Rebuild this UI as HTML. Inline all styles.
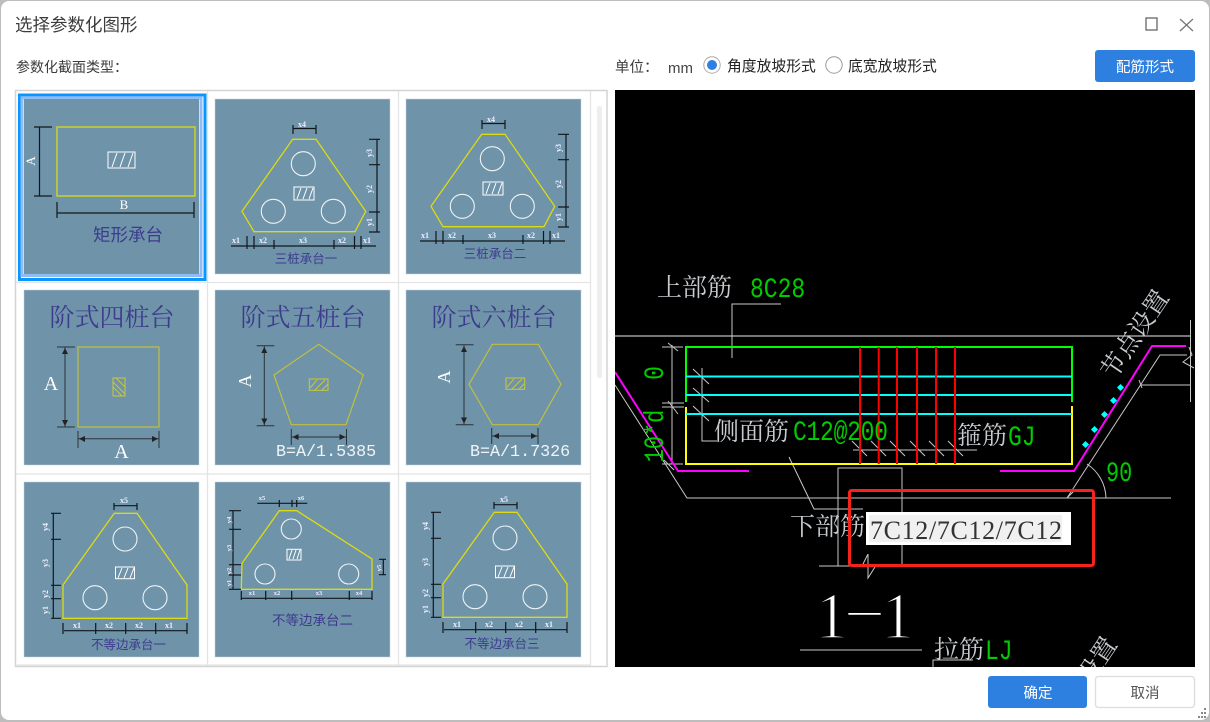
<!DOCTYPE html>
<html lang="zh"><head><meta charset="utf-8"><title>选择参数化图形</title>
<style>
html,body{margin:0;padding:0;width:1210px;height:722px;overflow:hidden;background:#bdbdbd}
svg{display:block;filter:blur(.35px)}
.s{font-family:"Liberation Sans","Noto Sans CJK SC",sans-serif}
.t{font-family:"Liberation Serif","Noto Serif CJK SC",serif}
.m{font-family:"Liberation Mono",monospace}
.lb{font-family:"Noto Sans CJK SC",sans-serif;fill:#3d3b8e;text-anchor:middle}
.tt{font-family:"Noto Serif CJK SC",serif;fill:#3d3b8e;font-size:25px;text-anchor:middle}
.d{font-family:"Liberation Serif",serif;font-size:8px;font-weight:bold;fill:#eef;text-anchor:middle}
.y{fill:none;stroke:#dcdc10;stroke-width:1.3}
.y2{fill:none;stroke:#c0c040;stroke-width:1.2}
.k{fill:none;stroke:#10181c;stroke-width:1.2}
.k2{fill:none;stroke:#2a3338;stroke-width:1}
.c{fill:none;stroke:#eef3f5;stroke-width:1.1}
.h{fill:#6f93a9;stroke:#fff;stroke-width:1}
.hl{stroke:#fff;stroke-width:1}
.hy{fill:none;stroke:#c8c83c;stroke-width:1}
.w{fill:none;stroke:#c8c8c8;stroke-width:1}
.cjk{font-family:"Liberation Serif","Noto Serif CJK SC",serif;fill:#c8ccd0;font-size:25px}
.g{font-family:"Liberation Mono",monospace;fill:#0c0;font-size:23px}
</style></head><body>
<svg width="1210" height="722" viewBox="0 0 1210 722" xmlns="http://www.w3.org/2000/svg">
<defs><clipPath id="cv"><rect x="615" y="90" width="580" height="577"/></clipPath></defs>
<rect x="1" y="1" width="1208" height="719" rx="8" fill="#fff"/>

<!-- header -->
<text x="15" y="31" class="s" font-size="17.5" fill="#3c3c3c">选择参数化图形</text>
<rect x="1146" y="18" width="11" height="12" fill="none" stroke="#666" stroke-width="1.3"/>
<path d="M1180 19L1193 31M1193 19L1180 31" stroke="#777" stroke-width="1.3" fill="none"/>
<text x="16" y="72" class="s" font-size="14" fill="#3c3c3c">参数化截面类型：</text>
<text x="615" y="72" class="s" font-size="14.5" fill="#3c3c3c">单位：</text>
<text x="668" y="73" class="s" font-size="15" fill="#444">mm</text>
<circle cx="712" cy="65" r="8.2" fill="#fff" stroke="#aaa" stroke-width="1"/>
<circle cx="712" cy="65" r="5" fill="#2e80e0"/>
<text x="727" y="71" class="s" font-size="14.8" fill="#222">角度放坡形式</text>
<circle cx="834" cy="65" r="8.2" fill="#fff" stroke="#999" stroke-width="1"/>
<text x="848" y="71" class="s" font-size="14.8" fill="#222">底宽放坡形式</text>
<rect x="1095" y="50" width="100" height="32" rx="3" fill="#2e80e0"/>
<text x="1145" y="72" class="s" font-size="14.5" fill="#fff" text-anchor="middle">配筋形式</text>

<!-- list frame -->
<rect x="15.5" y="90.5" width="591.5" height="576" fill="#fff" stroke="#d4d4d4" stroke-width="1.5"/>
<path d="M207.5 91V666M398.5 91V666M590.5 91V666M16 282.5H590M16 474H590M16 665H590" stroke="#e4e4e4" stroke-width="1.3" fill="none"/>
<rect x="597" y="106" width="5" height="272" rx="2" fill="#eee"/>

<!-- thumbnails -->
<rect x="19.5" y="95" width="185.5" height="184.5" fill="none" stroke="#0a96ff" stroke-width="3"/>
<rect x="22" y="97.75" width="179" height="177.75" fill="none" stroke="#8fbcf5" stroke-width="3"/>
<rect x="24" y="99" width="175" height="175" fill="#6f93a9"/>
<g fill="#6f93a9" stroke="#c4d4dc" stroke-width=".5">
<rect x="215" y="99" width="175" height="175"/><rect x="406" y="99" width="175" height="175"/>
<rect x="24" y="290" width="175" height="175"/><rect x="215" y="290" width="175" height="175"/><rect x="406" y="290" width="175" height="175"/>
<rect x="24" y="482" width="175" height="175"/><rect x="215" y="482" width="175" height="175"/><rect x="406" y="482" width="175" height="175"/>
</g>

<!-- 1 -->
<rect x="57" y="127" width="138" height="69" class="y"/>
<rect x="108" y="152" width="27" height="16" class="h"/>
<path d="M112 167L117 153M120 167L125 153M128 167L133 153" class="hl"/>
<path d="M39.5 127V196M34 127H52M34 196H52M57 213H194M57 202V218M194 202V218" class="k"/>
<text x="35" y="161" class="t" font-size="13" fill="#fff" text-anchor="middle" transform="rotate(-90 35 161)">A</text>
<text x="124" y="209" class="t" font-size="13" fill="#fff" text-anchor="middle">B</text>
<text x="128" y="241" class="lb" font-size="17.5">矩形承台</text>

<!-- 2 -->
<g>
<path d="M292.7 139.3H316L365.7 211.3L355 231.7H254L242 211.3Z" class="y"/>
<circle cx="303.3" cy="163.7" r="12" class="c"/><circle cx="273.3" cy="211.3" r="12" class="c"/><circle cx="333.3" cy="211.3" r="12" class="c"/>
<rect x="294" y="187" width="20" height="13" class="h"/><path d="M297 199L301 188M303 199L307 188M309 199L313 188" class="hl"/>
<path d="M293 128.5H316M293 125V134M316 125V134M377 139.3V232M369 139.3H380M369 164.7H380M369 212H380M369 232H380M231 246H376M247 236V249M254 236V249M274 240V249M334 240V249M354.500 236V249M361 236V249" class="k"/>
<text x="302" y="127" class="d">x4</text>
<text x="372" y="153" class="d" transform="rotate(-90 372 153)">y3</text><text x="372" y="189" class="d" transform="rotate(-90 372 189)">y2</text><text x="372" y="222" class="d" transform="rotate(-90 372 222)">y1</text>
<text x="236" y="243" class="d">x1</text><text x="263" y="243" class="d">x2</text><text x="303" y="243" class="d">x3</text><text x="342" y="243" class="d">x2</text><text x="367" y="243" class="d">x1</text>
<text x="306" y="263" class="lb" font-size="12.500">三桩承台一</text>
</g>

<!-- 3 -->
<g transform="translate(189 -5)">
<path d="M292.7 139.3H316L365.7 211.3L355 231.7H254L242 211.3Z" class="y"/>
<circle cx="303.3" cy="163.7" r="12" class="c"/><circle cx="273.3" cy="211.3" r="12" class="c"/><circle cx="333.3" cy="211.3" r="12" class="c"/>
<rect x="294" y="187" width="20" height="13" class="h"/><path d="M297 199L301 188M303 199L307 188M309 199L313 188" class="hl"/>
<path d="M293 128.5H316M293 125V134M316 125V134M377 139.3V232M369 139.3H380M369 164.7H380M369 212H380M369 232H380M231 246H376M247 236V249M254 236V249M274 240V249M334 240V249M354.500 236V249M361 236V249" class="k"/>
<text x="302" y="127" class="d">x4</text>
<text x="372" y="153" class="d" transform="rotate(-90 372 153)">y3</text><text x="372" y="189" class="d" transform="rotate(-90 372 189)">y2</text><text x="372" y="222" class="d" transform="rotate(-90 372 222)">y1</text>
<text x="236" y="243" class="d">x1</text><text x="263" y="243" class="d">x2</text><text x="303" y="243" class="d">x3</text><text x="342" y="243" class="d">x2</text><text x="367" y="243" class="d">x1</text>
<text x="306" y="263" class="lb" font-size="12.500">三桩承台二</text>
</g>

<!-- 4 -->
<text x="112" y="326" class="tt">阶式四桩台</text>
<rect x="78" y="347" width="81" height="80" class="y2"/>
<rect x="113" y="378" width="12" height="18" class="hy"/><path d="M113 382L125 394M113 387L122 396M116 378L125 387" class="hy"/>
<path d="M65 347V427M57 347H75M57 427H75M78 438.700H159M78 431V448M159 431V448" class="k2"/>
<path d="M65 348L62 354H68ZM65 426L62 420H68ZM79 438.700L85 436V442ZM158 438.700L152 436V442Z" fill="#222"/>
<text x="51" y="390" class="t" font-size="20" fill="#fff" text-anchor="middle">A</text>
<text x="121.500" y="458" class="t" font-size="20" fill="#fff" text-anchor="middle">A</text>

<!-- 5 -->
<text x="303" y="326" class="tt">阶式五桩台</text>
<path d="M318.700 344.300L363.300 375L346 424.700H291.300L274 375Z" class="y2"/>
<rect x="309.300" y="379" width="18.700" height="11.300" class="hy"/><path d="M310 388L317 380M315 390L325 380M322 390L328 384" class="hy"/>
<path d="M264.300 345.700V425.700M256.700 345.700H274.300M256.700 425.700H274.300M291.300 437H346.500M291.300 429V445M346.500 429V445" class="k2"/>
<path d="M264.300 347L261.300 353H267.300ZM264.300 424.500L261.300 418.500H267.300ZM292.500 437L298.500 434V440ZM345.500 437L339.500 434V440Z" fill="#222"/>
<text x="251" y="381" class="t" font-size="18" fill="#fff" text-anchor="middle" transform="rotate(-90 251 381)">A</text>
<text x="276" y="456" class="m" font-size="16.700" fill="#f0f4f6">B=A/1.5385</text>

<!-- 6 -->
<text x="494" y="326" class="tt">阶式六桩台</text>
<path d="M492.300 344.300H538.300L561 384.300L538.300 424.700H492.300L469 384.300Z" class="y2"/>
<rect x="506" y="378" width="18.700" height="11.300" class="hy"/><path d="M507 387L514 379M512 389L522 379M519 389L524 384" class="hy"/>
<path d="M464 344.700V424.700M455.700 344.700H473.500M455.700 424.700H473.500M491.700 436H538M491.700 428V444M538 428V444" class="k2"/>
<path d="M464 346L461 352H467ZM464 423.500L461 417.500H467ZM493 436L499 433V439ZM537 436L531 433V439Z" fill="#222"/>
<text x="450" y="377" class="t" font-size="18" fill="#fff" text-anchor="middle" transform="rotate(-90 450 377)">A</text>
<text x="470" y="456" class="m" font-size="16.700" fill="#f0f4f6">B=A/1.7326</text>

<!-- 7 -->
<path d="M114.300 513.300H137L187 585V618.300H63V585Z" class="y"/>
<circle cx="125" cy="539" r="12" class="c"/><circle cx="95" cy="597.700" r="12" class="c"/><circle cx="155" cy="597.700" r="12" class="c"/>
<rect x="115.500" y="567" width="19" height="11.700" class="h"/><path d="M118 578L122 568M124 578L128 568M130 578L134 568" class="hl"/>
<path d="M114 505.700H137M114 503V510M137 503V510M53.300 513.300V618.300M51 513.300H61M51 539.300H61M51 585.300H61M51 598.700H61M51 618.300H61M64 630.700H187M63 623V634M95.700 623V634M125.700 623V634M155.700 623V634M187 623V634" class="k"/>
<text x="124" y="503" class="d">x5</text>
<text x="48" y="527" class="d" transform="rotate(-90 48 527)">y4</text><text x="48" y="563" class="d" transform="rotate(-90 48 563)">y3</text><text x="48" y="594" class="d" transform="rotate(-90 48 594)">y2</text><text x="48" y="610" class="d" transform="rotate(-90 48 610)">y1</text>
<text x="77" y="628" class="d">x1</text><text x="109" y="628" class="d">x2</text><text x="139" y="628" class="d">x2</text><text x="169" y="628" class="d">x1</text>
<text x="128.500" y="649" class="lb" font-size="12.500">不等边承台一</text>

<!-- 8 -->
<path d="M279.300 510.700H296.700L372 559V589.300H241.300L242 563.300Z" class="y"/>
<circle cx="291.300" cy="529" r="10" class="c"/><circle cx="265" cy="574" r="10" class="c"/><circle cx="348.700" cy="574" r="10" class="c"/>
<rect x="287" y="549.300" width="14" height="10.700" class="h"/><path d="M289 559L292 550M293 559L296 550M297 559L300 550" class="hl"/>
<path d="M257.300 503.300H307.300M279.300 500V507M292 500V507M296.700 500V507M233 510.700V589.300M229 510.700H241M229 529.300H241M229 564.700H241M229 575H241M229 589.300H241M383.300 559.300V574.700M379 559.300H386M379 574.700H386M241.300 598.300H372M241.300 591V600M265.700 591V600M291.700 591V600M349.300 591V600M372 591V600" class="k"/>
<g><text x="262" y="500" class="d" style="font-size:6.500px">x5</text><text x="301" y="500" class="d" style="font-size:6.500px">x6</text>
<text x="231" y="520" class="d" style="font-size:6.500px" transform="rotate(-90 231 520)">y4</text><text x="231" y="548" class="d" style="font-size:6.500px" transform="rotate(-90 231 548)">y3</text><text x="231" y="571" class="d" style="font-size:6.500px" transform="rotate(-90 231 571)">y2</text><text x="231" y="583" class="d" style="font-size:6.500px" transform="rotate(-90 231 583)">y1</text>
<text x="381" y="568" class="d" style="font-size:6.500px" transform="rotate(-90 381 568)">y5</text>
<text x="252" y="595" class="d" style="font-size:6.500px">x1</text><text x="277" y="595" class="d" style="font-size:6.500px">x2</text><text x="319" y="595" class="d" style="font-size:6.500px">x3</text><text x="359" y="595" class="d" style="font-size:6.500px">x4</text></g>
<text x="312.500" y="625" class="lb" font-size="13.500">不等边承台二</text>

<!-- 9 -->
<g transform="translate(380 -1)">
<path d="M114.300 513.300H137L187 585V618.300H63V585Z" class="y"/>
<circle cx="125" cy="539" r="12" class="c"/><circle cx="95" cy="597.700" r="12" class="c"/><circle cx="155" cy="597.700" r="12" class="c"/>
<rect x="115.500" y="567" width="19" height="11.700" class="h"/><path d="M118 578L122 568M124 578L128 568M130 578L134 568" class="hl"/>
<path d="M114 505.700H137M114 503V510M137 503V510M53.300 513.300V618.300M51 513.300H61M51 539.300H61M51 585.300H61M51 598.700H61M51 618.300H61M64 630.700H187M63 623V634M95.700 623V634M125.700 623V634M155.700 623V634M187 623V634" class="k"/>
<text x="124" y="503" class="d">x5</text>
<text x="48" y="527" class="d" transform="rotate(-90 48 527)">y4</text><text x="48" y="563" class="d" transform="rotate(-90 48 563)">y3</text><text x="48" y="594" class="d" transform="rotate(-90 48 594)">y2</text><text x="48" y="610" class="d" transform="rotate(-90 48 610)">y1</text>
<text x="77" y="628" class="d">x1</text><text x="109" y="628" class="d">x2</text><text x="139" y="628" class="d">x2</text><text x="169" y="628" class="d">x1</text>
<text x="122" y="649" class="lb" font-size="12.500">不等边承台三</text>
</g>

<!-- CAD canvas -->
<rect x="615" y="90" width="580" height="577" fill="#000"/>
<g clip-path="url(#cv)">
<path d="M615 336H1190" stroke="#bbb" stroke-width="1.300" fill="none"/>
<path d="M1190.500 320V402M1140 385H1190.500M1067 498L1160 355H1187M615 385L687 498H1171M789 457L814 509H863M838 566V468H902V566M819 566H902M732 358V304H781M702 368V441H717M672 345V464M662 347H683M662 403H684M662 407H684M662 464H683M853 450H977M800 650H922M933 667V660H973M868 554L862 566M868 554V578L875 567" class="w"/>
<path d="M1087 464A42 42 0 0 1 1106 498M1067 498L1075 490M1189 347L1192 355L1183 362L1194 368M1139 380L1142 388" class="w"/>
<path d="M693 369L709 384M693 388L709 402M693 406L709 421M852 441L867 456M871 441L886 456M890 441L905 456M910 441L925 456M929 441L944 456M948 441L963 456M668 343L678 351M668 401L678 414M664 460L674 470" class="w"/>
<path d="M686 402V347H1072V402" fill="none" stroke="#0f0" stroke-width="2"/>
<path d="M686 407V464H1072V406" fill="none" stroke="#ff0" stroke-width="2"/>
<path d="M686 376.500H1072M686 395H1072M686 414H1072" stroke="#0ff" stroke-width="2" fill="none"/>
<path d="M860 347V464M878.700 347V464M897 347V464M917 347V464M936 347V464M955 347V464" stroke="#f00" stroke-width="2" fill="none"/>
<path d="M615 372L678 471H749M1000 471H1074L1152 346H1186" stroke="#f0f" stroke-width="2" fill="none"/>
<g fill="#0ff"><rect x="1118" y="385" width="5" height="5" transform="rotate(45 1120.500 387.500)"/><rect x="1111" y="398" width="5" height="5" transform="rotate(45 1113.500 400.500)"/><rect x="1102" y="412" width="5" height="5" transform="rotate(45 1104.500 414.500)"/><rect x="1092" y="427" width="5" height="5" transform="rotate(45 1094.500 429.500)"/><rect x="1083" y="442" width="5" height="5" transform="rotate(45 1085.500 444.500)"/></g>

<text x="657" y="296" class="cjk">上部筋</text>
<text class="g" transform="translate(750 297) scale(1 1.22)">8C28</text>
<text x="714" y="440" class="cjk">侧面筋</text>
<text class="g" textLength="95" transform="translate(793 440) scale(1 1.2)">C12@200</text>
<text x="957" y="444" class="cjk">箍筋</text>
<text class="g" transform="translate(1008 445) scale(1 1.22)">GJ</text>
<text x="790" y="535" class="cjk">下部筋</text>
<text x="934" y="658" class="cjk">拉筋</text>
<text class="g" transform="translate(985 659) scale(1 1.22)">LJ</text>
<text class="g" transform="translate(1106 481) scale(.95 1.22)">90</text>
<text class="g" text-anchor="middle" transform="translate(663 373) rotate(-90) scale(1 1.22)">0</text>
<text class="g" text-anchor="middle" transform="translate(663 436) rotate(-90) scale(.95 1.22)">10*d</text>
<text x="1142" y="339" class="cjk" text-anchor="middle" transform="rotate(-56 1142 339)">节点设置</text>
<text x="1090" y="686" class="cjk" text-anchor="middle" transform="rotate(-56 1090 686)">节点设置</text>
<text x="815" y="638" class="t" font-size="66" fill="#fff" stroke="#000" stroke-width="1.6">1<tspan dy="-9">–</tspan><tspan dy="9">1</tspan></text>

<rect x="866" y="512" width="205" height="33" fill="#fff"/>
<rect x="869" y="515" width="193" height="27" fill="#f0f0f0"/>
<text x="870" y="539" class="t" font-size="26" fill="#333" textLength="192">7C12/7C12/7C12</text>
<rect x="849.500" y="490.500" width="244" height="75" rx="2" fill="none" stroke="#f5231a" stroke-width="3"/>
</g>

<!-- footer -->
<rect x="988" y="676" width="99" height="32" rx="3" fill="#2e80e0"/>
<text x="1038" y="698" class="s" font-size="14.500" fill="#fff" text-anchor="middle">确定</text>
<rect x="1095.500" y="676.500" width="99" height="31" rx="3" fill="#fff" stroke="#ddd" stroke-width="1.300"/>
<text x="1145" y="698" class="s" font-size="14.500" fill="#555" text-anchor="middle">取消</text>
<g fill="#888"><rect x="1204" y="708" width="2" height="2"/><rect x="1201" y="712" width="2" height="2"/><rect x="1204" y="712" width="2" height="2"/><rect x="1198" y="716" width="2" height="2"/><rect x="1201" y="716" width="2" height="2"/><rect x="1204" y="716" width="2" height="2"/></g>
</svg>
</body></html>
